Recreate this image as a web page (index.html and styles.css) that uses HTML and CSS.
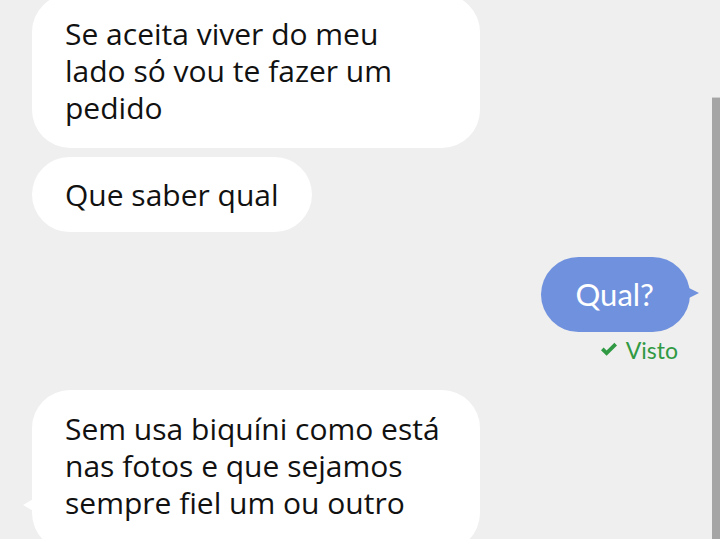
FILE: index.html
```html
<!DOCTYPE html>
<html lang="pt">
<head>
<meta charset="utf-8">
<link rel="stylesheet" href="styles.css">
</head>
<body>
<div class="chat">
  <div class="bubble in first">Se aceita viver do meu<br>lado só vou te fazer um<br>pedido</div>
  <div class="bubble in second">Que saber qual</div>
  <div class="bubble out">Qual?</div>
  <div class="seen"><svg class="check" width="18" height="15" viewBox="0 0 18 15"><path d="M1 8.2 L3.6 5.6 L6.6 8.6 L14.4 0.8 L17 3.4 L6.6 13.8 Z" fill="#2f9a43"/></svg><span>Visto</span></div>
  <div class="bubble in last">Sem usa biquíni como está<br>nas fotos e que sejamos<br>sempre fiel um ou outro</div>
</div>
<div class="scrollbar"></div>
</body>
</html>
```
FILE: styles.css
```css
html, body {
  margin: 0;
  padding: 0;
  width: 720px;
  height: 539px;
  overflow: hidden;
  background: #efefef;
}
.chat {
  display: flex;
  flex-direction: column;
  align-items: flex-start;
  padding: 0 32px;
  margin-top: -6px;
  font-family: "Open Sans", "Liberation Sans", sans-serif;
  color: #111;
}
.bubble {
  position: relative;
  font-size: 30px;
  line-height: 37px;
  border-radius: 38px;
  background: #fff;
}
.first {
  width: 448px;
  box-sizing: border-box;
  padding: 21px 33px 22px;
}
.second {
  margin-top: 9px;
  padding: 19px 33px 19px 33px;
}
.out {
  align-self: flex-end;
  margin-top: 25px;
  margin-right: -2px;
  background: #7091de;
  color: #fff;
  font-family: Lato, "Open Sans", sans-serif;
  font-size: 31px;
  padding: 19px 36px 19px 35px;
}
.out::after {
  content: "";
  position: absolute;
  right: -9px;
  top: 30px;
  border-left: 12px solid #7091de;
  border-top: 6px solid transparent;
  border-bottom: 6px solid transparent;
}
.seen {
  align-self: flex-end;
  display: flex;
  align-items: center;
  gap: 8px;
  margin-top: 6px;
  margin-right: 10px;
  font-family: Lato, "Open Sans", sans-serif;
  font-size: 23px;
  line-height: 24px;
  color: #2f9a43;
}
.check {
  display: block;
  margin-top: -2px;
}
.last {
  width: 448px;
  box-sizing: border-box;
  margin-top: 28px;
  padding: 20px 33px 30px;
}
.last::before {
  content: "";
  position: absolute;
  left: -9px;
  top: 108px;
  border-right: 12px solid #fff;
  border-top: 7px solid transparent;
  border-bottom: 7px solid transparent;
}
.scrollbar {
  position: absolute;
  right: 0;
  top: 97px;
  width: 8px;
  height: 442px;
  background: #a5a5a5;
  border-top: 1px solid #cfcfcf;
}
```
